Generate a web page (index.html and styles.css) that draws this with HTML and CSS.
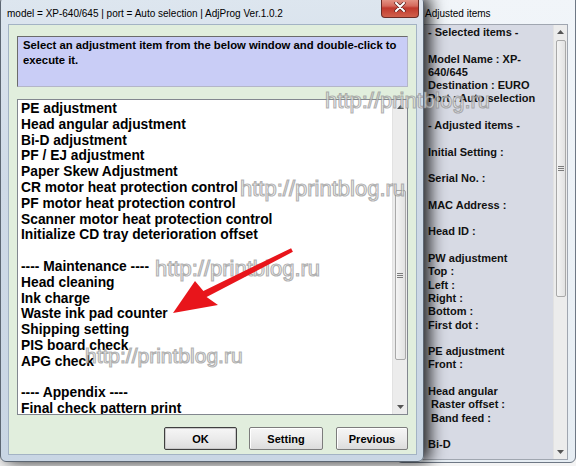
FILE: index.html
```html
<!DOCTYPE html>
<html lang="en">
<head>
  <meta charset="UTF-8">
  <title>AdjProg</title>
  <link rel="stylesheet" href="styles.css">
</head>
<body>
  <div class="desktop">

    <div class="win side">
      <div class="side-title">Adjusted items</div>
      <div class="side-body">
        <div class="side-text">- Selected items -

Model Name : XP-
640/645
Destination : EURO
Port : Auto selection

- Adjusted items -

Initial Setting :

Serial No. :

MAC Address :

Head ID :

PW adjustment
Top :
Left :
Right :
Bottom :
First dot :

PE adjustment
Front :

Head angular
 Raster offset :
 Band feed :

Bi-D</div>
        <div class="vscroll side-scroll">
          <div class="sarrow"><svg width="7" height="4" viewBox="0 0 7 4"><path d="M0 4 L3.5 0 L7 4 Z" fill="#555"/></svg></div>
          <div class="track"><div class="thumb side-thumb"></div></div>
          <div class="sarrow"><svg width="7" height="4" viewBox="0 0 7 4"><path d="M0 0 L7 0 L3.5 4 Z" fill="#555"/></svg></div>
        </div>
      </div>
    </div>

    <div class="win main">
      <div class="titlebar">
        <span class="title">model = XP-640/645 | port = Auto selection | AdjProg Ver.1.0.2</span>
        <span class="close">
          <svg width="12" height="10" viewBox="0 0 12 10">
            <path d="M2 1 L10 9 M10 1 L2 9" stroke="#5a2420" stroke-width="3.4" stroke-linecap="round"/>
            <path d="M2 1 L10 9 M10 1 L2 9" stroke="#fff" stroke-width="2" stroke-linecap="round"/>
          </svg>
        </span>
      </div>
      <div class="client">
        <div class="info">Select an adjustment item from the below window and double-click to<br>execute it.</div>
        <div class="listbox">
          <ul class="items">
            <li>PE adjustment</li>
            <li>Head angular adjustment</li>
            <li>Bi-D adjustment</li>
            <li>PF / EJ adjustment</li>
            <li>Paper Skew Adjustment</li>
            <li>CR motor heat protection control</li>
            <li>PF motor heat protection control</li>
            <li>Scanner motor heat protection control</li>
            <li>Initialize CD tray deterioration offset</li>
            <li>&nbsp;</li>
            <li>---- Maintenance ----</li>
            <li>Head cleaning</li>
            <li>Ink charge</li>
            <li>Waste ink pad counter</li>
            <li>Shipping setting</li>
            <li>PIS board check</li>
            <li>APG check</li>
            <li>&nbsp;</li>
            <li>---- Appendix ----</li>
            <li>Final check pattern print</li>
          </ul>
          <div class="vscroll list-scroll">
            <div class="sarrow"><svg width="7" height="4" viewBox="0 0 7 4"><path d="M0 4 L3.5 0 L7 4 Z" fill="#555"/></svg></div>
            <div class="track"><div class="thumb list-thumb"></div></div>
            <div class="sarrow"><svg width="7" height="4" viewBox="0 0 7 4"><path d="M0 0 L7 0 L3.5 4 Z" fill="#555"/></svg></div>
          </div>
        </div>
        <div class="buttons">
          <button class="btn btn-default ok">OK</button>
          <button class="btn setting">Setting</button>
          <button class="btn previous">Previous</button>
        </div>
      </div>
    </div>

    <span class="mark m1">http://printblog.ru</span>
    <span class="mark m2">http://printblog.ru</span>
    <span class="mark m3">http://printblog.ru</span>
    <span class="mark m4">http://printblog.ru</span>

    <svg class="arrow" width="576" height="466" viewBox="0 0 576 466">
      <polygon points="173,313 195,281 203.4,290.9 291.1,248.2 292.9,251.8 206.6,297.1 218,305" fill="#e8151b"/>
    </svg>
  </div>
</body>
</html>
```

FILE: styles.css
```css
body{
  margin:0;
  background:#f4f4f4;
  font-family:"Liberation Sans", Arial, sans-serif;
  color:#000;
}
.desktop{
  position:relative;
  width:576px;
  height:466px;
  overflow:hidden;
}
.win{
  position:absolute;
  box-sizing:border-box;
  display:flex;
  flex-direction:column;
}

/* main window */
.main{
  left:0;
  top:-4px;
  width:424px;
  height:466px;
  padding:0 6px 6px 7px;
  border:1px solid #5d6773;
  border-radius:6px;
  background:linear-gradient(#dde6ef, #cfdae7 40%, #c9d6e4);
  box-shadow:6px 0 16px rgba(0,0,0,.85);
  z-index:2;
}
.titlebar{
  flex:none;
  height:27px;
  box-sizing:border-box;
  padding-top:5px;
  display:flex;
  align-items:center;
}
.title{
  margin-left:-1px;
  font-size:10px;
  white-space:nowrap;
}
.close{
  margin-left:auto;
  margin-right:-2px;
  margin-top:-5px;
  align-self:flex-start;
  width:38px;
  height:21px;
  box-sizing:border-box;
  border:1px solid #6b2c26;
  border-top:none;
  border-radius:0 0 4px 4px;
  background:linear-gradient(#eaa798, #d56a5c 45%, #c0392d 55%, #d0604c);
  display:flex;
  align-items:center;
  justify-content:center;
}
.client{
  flex:1;
  display:flex;
  flex-direction:column;
  padding:11px 8px 0 8px;
  background:#e1eedd;
  border:1px solid #a3b3c4;
}
.info{
  height:51px;
  box-sizing:border-box;
  padding:1px 5px;
  background:#c9cdf6;
  border:1px solid;
  border-color:#6b6b6b #b4b6c8 #b4b6c8 #6b6b6b;
  font-weight:bold;
  font-size:11.3px;
  line-height:15px;
}
.listbox{
  margin-top:12px;
  height:316px;
  box-sizing:border-box;
  display:flex;
  background:#fff;
  border:1px solid #82878f;
}
.items{
  flex:1;
  margin:0;
  padding:1px 0 0 3px;
  list-style:none;
  overflow:hidden;
  font-weight:bold;
  font-size:13.8px;
  line-height:15.8px;
}
.items li{
  height:15.8px;
  white-space:nowrap;
}

/* scrollbars */
.vscroll{
  display:flex;
  flex-direction:column;
  background:#ececec;
  border-left:1px solid #e2e2e2;
}
.list-scroll{ width:14px; }
.side-scroll{ width:13px; }
.sarrow{
  height:14px;
  display:flex;
  align-items:center;
  justify-content:center;
}
.track{
  flex:1;
  display:flex;
  flex-direction:column;
  align-items:center;
}
.thumb{
  width:calc(100% - 3px);
  box-sizing:border-box;
  border:1px solid #a9a9a9;
  border-radius:2px;
  background:linear-gradient(90deg, #f4f4f4, #e2e2e2);
  display:flex;
  align-items:center;
  justify-content:center;
}
.thumb::after{
  content:'';
  width:6px;
  height:5px;
  background:repeating-linear-gradient(#7c7c7c 0 1px, transparent 1px 2px);
}
.list-thumb{
  margin-top:76px;
  height:170px;
}
.side-thumb{
  margin-top:1px;
  height:257px;
}

.buttons{
  display:flex;
  justify-content:flex-end;
  gap:13px;
  margin-top:12px;
}
.btn{
  height:23px;
  padding:0;
  font-family:"Liberation Sans", Arial, sans-serif;
  font-weight:bold;
  font-size:11px;
  color:#000;
  background:linear-gradient(#f6f6f6, #ebebeb 50%, #dcdcdc);
  border:1px solid #7c7c7c;
  border-radius:2px;
  box-shadow:inset 1px 1px 0 #fff;
}
.btn-default{
  border-color:#3f3f3f;
  box-shadow:inset 0 0 0 1px #c8c8c8;
}
.ok{ width:73px; margin-right:-1px; }
.setting{ width:74px; }
.previous{ width:72px; }

/* side window */
.side{
  left:396px;
  top:-6px;
  width:180px;
  height:469px;
  padding:0 7px 2px 7px;
  border:1px solid #6e7885;
  border-radius:6px;
  background:linear-gradient(#f1f5f9, #e6edf3);
  z-index:1;
}
.side-title{
  flex:none;
  height:29px;
  box-sizing:border-box;
  padding:7px 0 0 21px;
  display:flex;
  align-items:center;
  font-size:10px;
}
.side-body{
  flex:1;
  min-height:0;
  display:flex;
  background:#d7dae4;
  border:1px solid #a0a6b0;
}
.side-text{
  flex:1;
  padding:1px 0 0 23px;
  overflow:hidden;
  white-space:pre;
  font-weight:bold;
  font-size:11px;
  line-height:13.3px;
  color:#111;
}

/* watermark and arrow */
.mark{
  position:absolute;
  z-index:3;
  font-size:22px;
  line-height:25px;
  white-space:nowrap;
  color:rgba(255,255,255,.7);
  -webkit-text-stroke:1.2px rgba(125,125,125,.6);
}
.m1{ left:325px; top:88px; }
.m2{ left:240px; top:176px; }
.m3{ left:155px; top:256px; }
.m4{ left:85px; top:343px; font-size:21px; }
.arrow{
  position:absolute;
  left:0;
  top:0;
  z-index:4;
}
```
